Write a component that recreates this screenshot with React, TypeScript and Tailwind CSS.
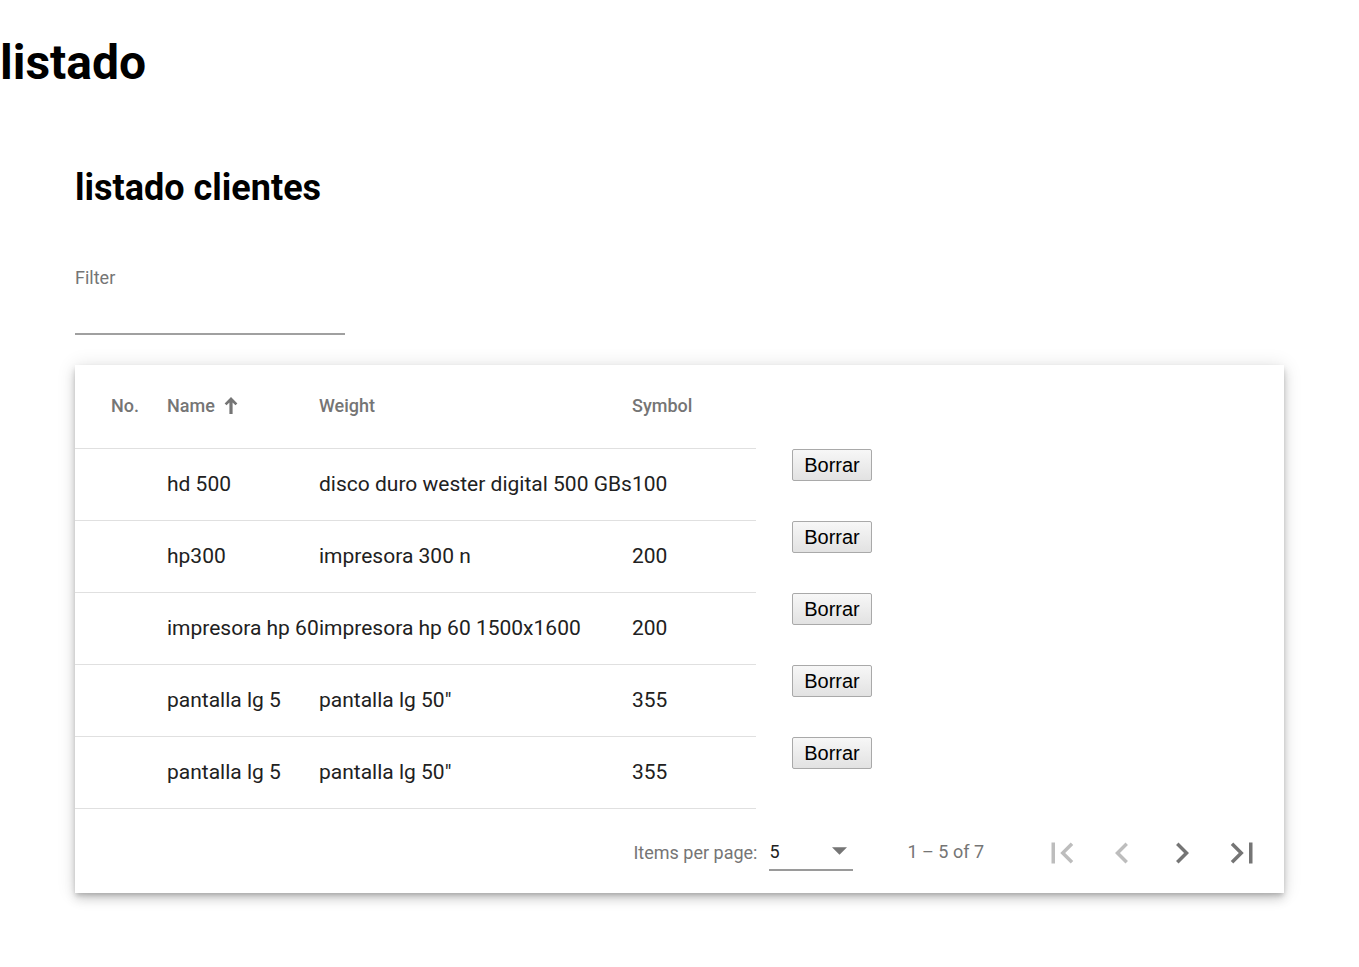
import React from "react";

const rows = [
  { name: "hd 500", weight: "disco duro wester digital 500 GBs", symbol: "100" },
  { name: "hp300", weight: "impresora 300 n", symbol: "200" },
  { name: "impresora hp 60", weight: "impresora hp 60 1500x1600", symbol: "200" },
  { name: "pantalla lg 5", weight: 'pantalla lg 50"', symbol: "355" },
  { name: "pantalla lg 5", weight: 'pantalla lg 50"', symbol: "355" },
];

function PagIcon({ d, color }: { d: string; color: string }) {
  return (
    <div className="w-[60px] h-[60px] flex items-center justify-center">
      <svg width="42" height="42" viewBox="0 0 24 24" fill={color}>
        <path d={d} />
      </svg>
    </div>
  );
}

export default function App() {
  return (
    <div className="bg-white min-h-[967px] font-['Roboto',sans-serif] text-black">
      <h1 className="m-0 pt-[35px] text-[48px] leading-[56px] font-bold">listado</h1>
      <div className="px-[75px]">
        <h2 className="mt-[76px] text-[36px] leading-[42px] font-bold">listado clientes</h2>
        <div className="mt-[58px] w-[270px]">
          <div className="text-[18px] leading-[21px] text-[#757575]">Filter</div>
          <div className="mt-[45px] h-[2px] bg-[#a0a0a0]"></div>
        </div>
        <div className="mt-[30px] bg-white shadow-[0_3px_5px_-1px_rgba(0,0,0,0.2),0_6px_10px_0_rgba(0,0,0,0.14),0_1px_18px_0_rgba(0,0,0,0.12)]">
          <div className="w-[681px] h-[84px] pb-[2px] flex items-center border-b border-[#e0e0e0] text-[18px] font-medium text-[#757575]">
            <div className="pl-[36px] w-[92px] shrink-0">No.</div>
            <div className="w-[152px] shrink-0 flex items-center">
              <span>Name</span>
              <svg className="ml-[9px]" width="14" height="17" viewBox="0 0 12 16" fill="#757575">
                <path d="M6 0 L12 6 L10.2 7.8 L7.5 5.1 V16 H4.5 V5.1 L1.8 7.8 L0 6 Z" />
              </svg>
            </div>
            <div className="w-[313px] shrink-0">Weight</div>
            <div className="w-[124px] shrink-0">Symbol</div>
          </div>
          {rows.map((r, i) => (
            <div key={i} className="flex items-start">
              <div className="w-[681px] h-[72px] flex items-center border-b border-[#e0e0e0] text-[21px] text-[#212121] whitespace-nowrap">
                <div className="pl-[36px] w-[92px] shrink-0"></div>
                <div className="w-[152px] shrink-0">{r.name}</div>
                <div className="w-[313px] shrink-0">{r.weight}</div>
                <div className="w-[124px] shrink-0">{r.symbol}</div>
              </div>
              <button className="ml-[36px] w-[80px] h-[32px] flex items-center justify-center border border-[#a9a9a9] rounded-[2px] bg-gradient-to-b from-[#f7f7f7] to-[#e2e2e2] font-['Liberation_Sans',Arial,sans-serif] text-[20px] leading-none text-black">
                Borrar
              </button>
            </div>
          ))}
          <div className="h-[84px] flex items-center justify-end pr-[12px] text-[18px] text-[#757575]">
            <span className="mt-[3px]">Items per page:</span>
            <div className="ml-[12px] w-[84px] flex flex-col mt-[9px]">
              <div className="flex items-center justify-between h-[21px]">
                <span className="text-[#212121]">5</span>
                <svg className="mr-[6px]" width="15" height="8" viewBox="0 0 10 5" fill="#757575">
                  <path d="M0 0 L10 0 L5 5 Z" />
                </svg>
              </div>
              <div className="mt-[7px] h-[2px] bg-[#9a9a9a]"></div>
            </div>
            <span className="ml-[54px] mt-[1px]">1 – 5 of 7</span>
            <div className="ml-[48px] flex items-center mt-[3px]">
              <PagIcon color="#bdbdbd" d="M18.41 16.59L13.82 12l4.59-4.59L17 6l-6 6 6 6zM6 6h2v12H6z" />
              <PagIcon color="#bdbdbd" d="M15.41 7.41L14 6l-6 6 6 6 1.41-1.41L10.83 12z" />
              <PagIcon color="#757575" d="M10 6L8.59 7.41 13.17 12l-4.58 4.59L10 18l6-6z" />
              <PagIcon color="#757575" d="M5.59 7.41L10.18 12l-4.59 4.59L7 18l6-6-6-6zM16 6h2v12h-2z" />
            </div>
          </div>
        </div>
      </div>
    </div>
  );
}
